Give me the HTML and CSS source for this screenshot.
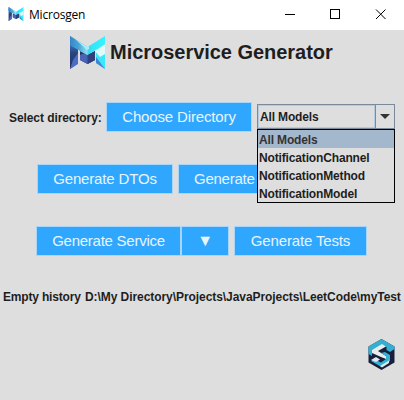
FILE: index.html
```html
<!DOCTYPE html>
<html lang="en">
<head>
<meta charset="utf-8">
<title>Microsgen</title>
<link rel="stylesheet" href="styles.css">
</head>
<body>
<svg width="0" height="0" class="defs" aria-hidden="true">
  <defs>
    <linearGradient id="cyan" x1="0" x2="1"><stop offset="0" stop-color="#3d98d6"/><stop offset=".4" stop-color="#52c3e6"/><stop offset=".65" stop-color="#31e6fb"/><stop offset="1" stop-color="#35f4ff"/></linearGradient>
    <linearGradient id="left-arm" x1="0" x2="1"><stop offset="0" stop-color="#3a84c8"/><stop offset=".5" stop-color="#48a5d8"/><stop offset="1" stop-color="#8fe3f0"/></linearGradient>
    <linearGradient id="leg" x1="0" x2="0" y1="0" y2="1"><stop offset="0" stop-color="#438ccf"/><stop offset=".45" stop-color="#294580"/><stop offset="1" stop-color="#26325f"/></linearGradient>
    <symbol id="m-logo" viewBox="0 0 35 33">
      <path d="M0 4L8 11V27L0 33Z" fill="url(#leg)"/>
      <path d="M3 24L8 17V28L0 33Z" fill="#4b6bc5"/>
      <path d="M10 15L17.5 19V28L10 24Z" fill="#263567"/>
      <path d="M17.5 19L25 15V24L17.5 28Z" fill="#263567"/>
      <path d="M10 19L17.5 16L25 19V24L17.5 28L10 24Z" fill="#4863b5"/>
      <path d="M17.5 19L25 15V24L17.5 28Z" fill="#304078"/>
      <path d="M26 14L35 5V33L26 27Z" fill="#39e8fa"/>
      <path d="M25 15L35 8V18L30 21Z" fill="#e2f9fc"/>
      <path d="M26 21L35 33L26 27Z" fill="#4383d2"/>
      <path d="M0 0L17.5 11L35 0V8L17.5 19L0 9Z" fill="url(#cyan)"/>
      <path d="M0 0L17.5 11L17.5 19L0 9Z" fill="url(#left-arm)"/>
      <path d="M5 3L17.5 11L19 10V13L17 14Z" fill="#a9edf5"/>
    </symbol>
  </defs>
</svg>
<header class="titlebar">
  <svg class="app-icon"><use href="#m-logo"/></svg>
  <span class="app-name">Microsgen</span>
  <svg class="controls" width="108" height="12" viewBox="0 0 108 12" fill="none" stroke="#000" shape-rendering="crispEdges"><path d="M0 5.500H10M45.500 .5H54.500V9.500H45.500Z"/><path d="M91 .5L100.500 10M100.500 .5L91 10" shape-rendering="auto"/></svg>
</header>
<main>
  <div class="brand"><svg class="logo"><use href="#m-logo"/></svg><h1>Microservice Generator</h1></div>
  <div class="row directory">
    <label>Select directory:</label>
    <button class="btn choose">Choose Directory</button>
    <div class="combo">
      <div class="value">All Models</div>
      <div class="arrow"><svg width="10" height="5"><path d="M0 0H10L5 5Z" fill="#333"/></svg></div>
      <ul class="popup"><li class="selected">All Models</li><li>NotificationChannel</li><li>NotificationMethod</li><li>NotificationModel</li></ul>
    </div>
  </div>
  <div class="row models"><button class="btn dtos">Generate DTOs</button><button class="btn more">Generate</button></div>
  <div class="row services"><button class="btn service">Generate Service</button><button class="btn down"><span class="tri">▼</span></button><button class="btn tests">Generate Tests</button></div>
  <div class="status"><span class="history">Empty history</span><span class="path">D:\My Directory\Projects\JavaProjects\LeetCode\myTest</span></div>
  <footer>
    <svg width="28" height="32" viewBox="0 0 28 32">
      <path d="M13.500 0L26.500 7.500V23.500L13.500 31L.5 23.500V7.500Z" fill="#191f3a"/>
      <path d="M13.500 0L26.500 7.500V10L22 13L18.500 11V8L15 6L4 12V17L.5 15V7.500Z" fill="#35aed2"/>
      <path d="M4 11L14 5L18 7.500L10 12L18 17V20L13 18L4 14Z" fill="#e6eeee"/>
      <path d="M17 13L22 16V22L13.500 28L3 22L6 20L13 23.500L18 20V17L13 14Z" fill="#36b1d5"/>
      <path d="M3 21L8 18L12 20.500L8 23Z" fill="#dcebed"/>
      <path d="M12 27L21 21.500V24L14 28.500Z" fill="#dcebed"/>
    </svg>
  </footer>
</main>
</body>
</html>
```
FILE: styles.css
```css
* { box-sizing: border-box; }
body { margin: 0; width: 404px; height: 400px; overflow: hidden; background: #dedede; color: #1e1e1e; font: bold 12px/18px "Liberation Sans", Arial, sans-serif; }
.defs { position: absolute; }
.titlebar { display: flex; height: 30px; background: #fff; padding-left: 8px; }
.app-icon { width: 16px; height: 14px; margin-top: 7px; }
.app-name { width: 248px; margin-left: 5px; font: 12px/29px "Open Sans", sans-serif; color: #000; letter-spacing: -.2px; }
.controls { margin: 9px 0 0 8px; }
.brand { display: flex; height: 72px; padding: 6px 0 0 70px; }
.logo { width: 35px; height: 33px; flex: none; }
h1 { margin: 4px 0 0 5px; font-size: 20px; line-height: 24px; white-space: nowrap; letter-spacing: -.03px; }
.row { display: flex; height: 30px; }
.directory { padding-left: 9px; }
label { width: 97px; line-height: 32px; white-space: nowrap; letter-spacing: -.08px; }
.btn { height: 30px; flex: none; padding: 0; border: 1px solid #a9d5f8; background: #2fa7ff; color: #e9f4fc; font: 15px/28px "Liberation Sans", Arial, sans-serif; letter-spacing: -.15px; white-space: nowrap; }
.choose { width: 146px; }
.combo { position: relative; display: flex; width: 138px; height: 25px; margin: 2px 0 0 5px; border: 1px solid #7a8a99; letter-spacing: -.15px; }
.value { width: 118px; border: 1px solid #b4cbe1; line-height: 22px; padding-left: 1px; }
.arrow { display: flex; align-items: center; justify-content: center; width: 19px; border-left: 1px solid #7a8a99; }
.popup { position: absolute; z-index: 1; left: -1px; top: 24px; width: 138px; height: 74px; margin: 0; padding: 0; border: 1px solid #000; background: #dedede; list-style: none; }
.popup li { height: 18px; line-height: 20px; padding-left: 1px; }
.popup .selected { background: #a3b8cc; color: #333; }
.models { margin-top: 32px; padding-left: 37px; }
.dtos { width: 136px; }
.more { width: 151px; margin-left: 5px; padding-left: 15px; text-align: left; letter-spacing: -.25px; }
.services { margin-top: 32px; padding-left: 36px; }
.service { width: 145px; letter-spacing: -.25px; }
.down { width: 48px; }
.tri { font-size: 16px; }
.tests { width: 133px; margin-left: 5px; }
.status { display: flex; height: 18px; margin-top: 32px; padding-left: 3px; white-space: nowrap; }
.history { width: 82px; letter-spacing: -.18px; }
.path { letter-spacing: -.065px; }
footer { display: flex; justify-content: flex-end; margin-top: 33px; padding-right: 8px; }
```
